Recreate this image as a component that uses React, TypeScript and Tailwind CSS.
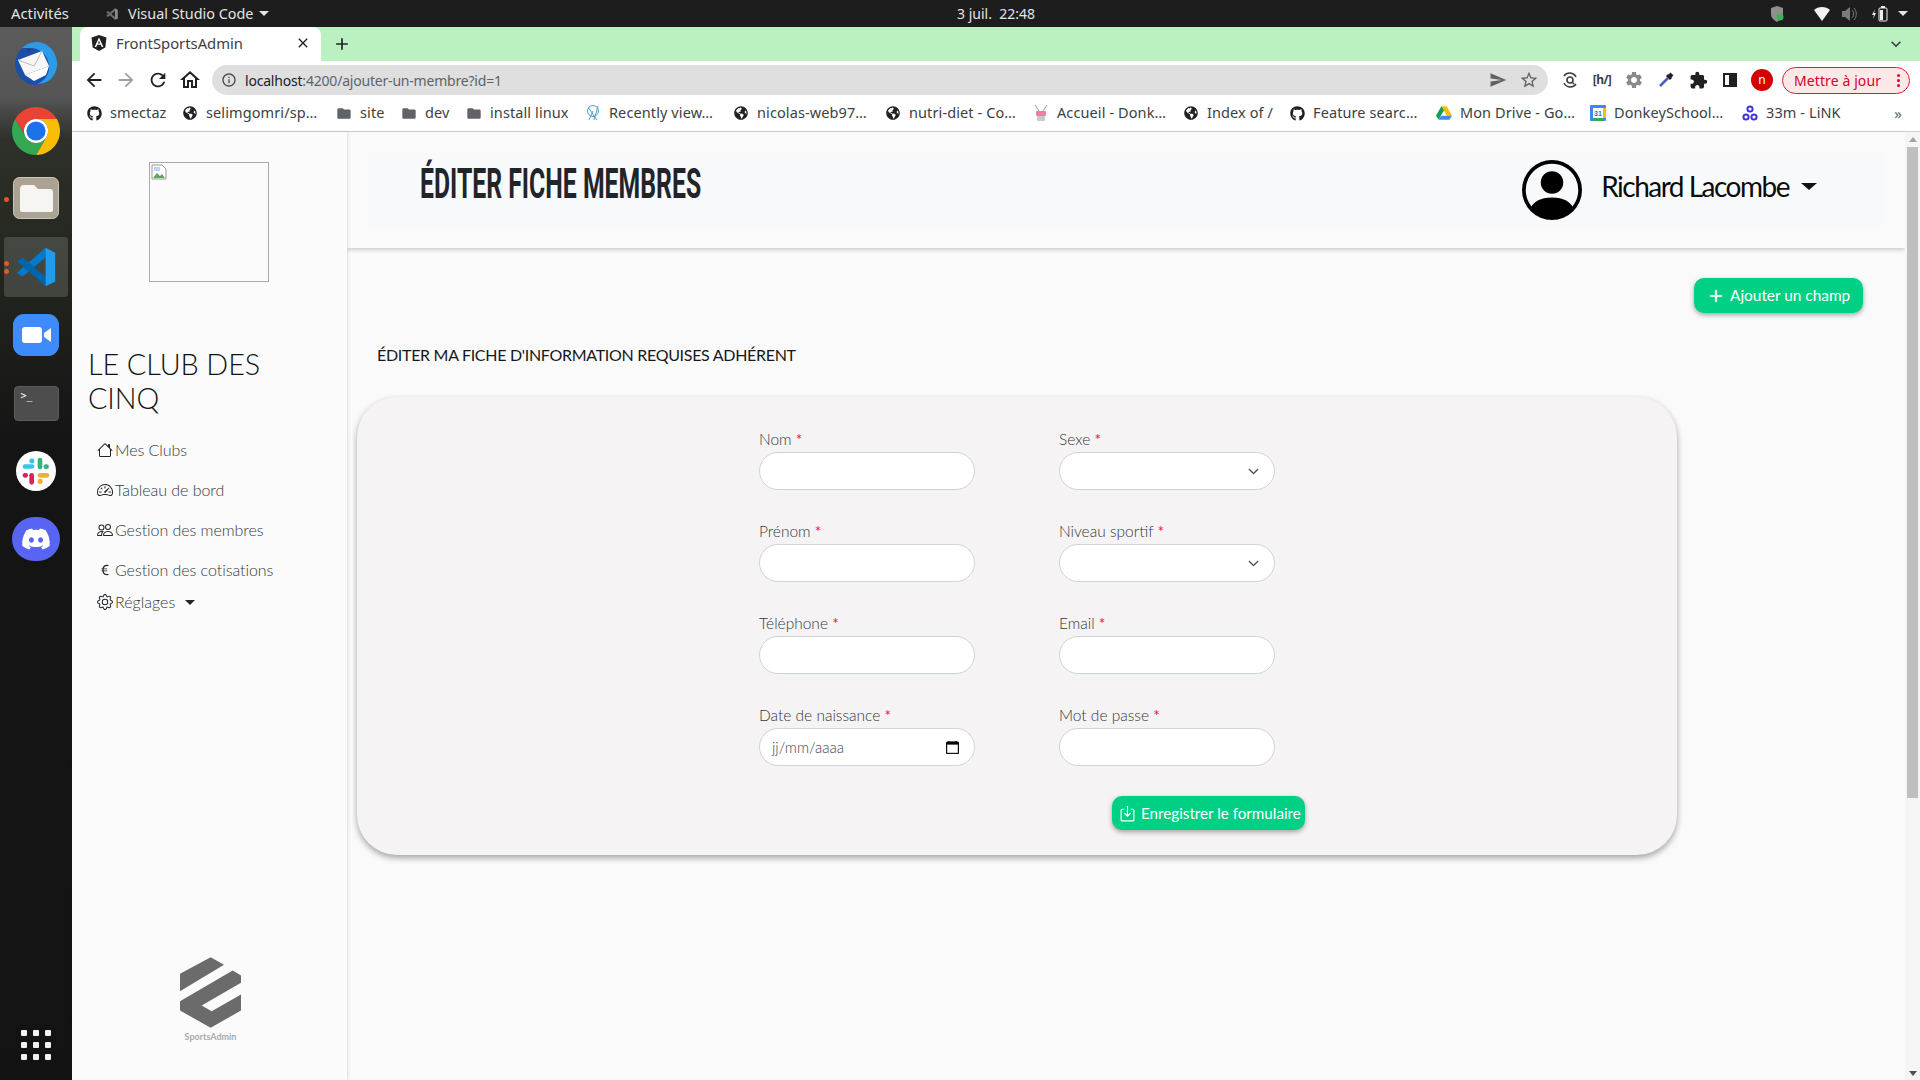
import React from "react";
import { FaGithub, FaGlobeAmericas, FaDiscord } from "react-icons/fa";
import { MdFolder, MdArrowBack, MdArrowForward, MdRefresh, MdOutlineHome, MdInfoOutline, MdSend, MdStarBorder, MdExtension, MdAdd, MdClose, MdExpandMore, MdSettings } from "react-icons/md";
import { BsHouse, BsSpeedometer2, BsPeople, BsGear, BsCurrencyEuro, BsPersonCircle, BsPlus, BsCalendar, BsChevronDown } from "react-icons/bs";

const ui = "font-['Noto_Sans','Open_Sans',sans-serif]";
const page = "font-['Lato','Noto_Sans',sans-serif]";

function Globe() {
  return <FaGlobeAmericas className="text-[14px] text-[#202124]" />;
}
function Folder() {
  return <MdFolder className="text-[17px] text-[#5f6368]" />;
}
function Drive() {
  return (
    <svg width="16" height="16" viewBox="0 0 24 24">
      <path d="M8 2h8l8 14h-8z" fill="#fbbc04" />
      <path d="M8 2L0 16l4 6 8-14z" fill="#0f9d58" />
      <path d="M8 16h16l-4 6H4z" fill="#4285f4" />
    </svg>
  );
}
function GCal() {
  return (
    <svg width="16" height="16" viewBox="0 0 16 16">
      <rect width="16" height="16" rx="1" fill="#4285f4" />
      <rect x="3" y="3" width="10" height="10" fill="#fff" />
      <rect x="13" y="3" width="3" height="10" fill="#fbbc04" />
      <rect x="3" y="13" width="10" height="3" fill="#34a853" />
      <text x="8" y="11" fontSize="7" fontWeight="700" fill="#1a73e8" textAnchor="middle" fontFamily="Liberation Sans">31</text>
    </svg>
  );
}
function Ninja() {
  return (
    <svg width="16" height="18" viewBox="0 0 16 18">
      <path d="M2 1l4 6M14 1l-4 6" stroke="#9a9a9a" strokeWidth="1" />
      <rect x="3" y="7" width="10" height="5" rx="1" fill="#ef7f9c" />
      <rect x="4" y="12" width="8" height="5" rx="1" fill="#c9c9c9" />
    </svg>
  );
}
function Recent() {
  return (
    <svg width="16" height="18" viewBox="0 0 16 18" fill="none" stroke="#4aa3c7" strokeWidth="1">
      <circle cx="8" cy="7" r="5.5" />
      <path d="M3 3l9 13M8 7l-4 9M13 2L9 16" />
    </svg>
  );
}
function Link33() {
  return (
    <svg width="16" height="18" viewBox="0 0 16 18" fill="none" stroke="#3d35e0" strokeWidth="2">
      <circle cx="8" cy="5" r="2.6" />
      <circle cx="4" cy="13" r="2.6" />
      <circle cx="12" cy="13" r="2.6" />
    </svg>
  );
}

const bookmarks = [
  { w: "w-[96px]", icon: <FaGithub className="text-[15px] text-[#202124]" />, t: "smectaz" },
  { w: "w-[154px]", icon: <Globe />, t: "selimgomri/sp…" },
  { w: "w-[65px]", icon: <Folder />, t: "site" },
  { w: "w-[65px]", icon: <Folder />, t: "dev" },
  { w: "w-[119px]", icon: <Folder />, t: "install linux" },
  { w: "w-[148px]", icon: <Recent />, t: "Recently view…" },
  { w: "w-[152px]", icon: <Globe />, t: "nicolas-web97…" },
  { w: "w-[148px]", icon: <Globe />, t: "nutri-diet - Co…" },
  { w: "w-[150px]", icon: <Ninja />, t: "Accueil - Donk…" },
  { w: "w-[106px]", icon: <Globe />, t: "Index of /" },
  { w: "w-[147px]", icon: <FaGithub className="text-[15px] text-[#202124]" />, t: "Feature searc…" },
  { w: "w-[154px]", icon: <Drive />, t: "Mon Drive - Go…" },
  { w: "w-[152px]", icon: <GCal />, t: "DonkeySchool…" },
  { w: "w-[120px]", icon: <Link33 />, t: "33m - LiNK" },
];

function TopBar() {
  return (
    <div className={`${ui} h-[27px] shrink-0 bg-[#1d1d1d] text-[#e4e4e4] text-[14.4px] flex items-center relative`}>
      <span className="ml-[11px] w-[94px] text-[14.8px]">Activités</span>
      <svg width="14" height="14" viewBox="0 0 48 48" className="mr-[9px]">
        <path d="M34 4L44 9V39L34 44Z" fill="#8a8a8a" />
        <path d="M34 4V14L10 34L4 30Z" fill="#6d6d6d" />
        <path d="M4 18L10 14L34 34V44Z" fill="#6d6d6d" />
      </svg>
      <span>Visual Studio Code</span>
      <span className="ml-[6px] w-0 h-0 border-x-[5px] border-x-transparent border-t-[5px] border-t-[#e4e4e4]" />
      <span className="absolute left-[957px] text-[14px]">3 juil.&nbsp;&nbsp;22:48</span>
      <div className="ml-auto flex items-center pr-[12px]">
        <svg width="14" height="16" viewBox="0 0 14 16">
          <path d="M7 0l6 2v6c0 4-3 6-6 8-3-2-6-4-6-8V2z" fill="#8f8f8f" />
          <circle cx="10" cy="11" r="3.5" fill="#3cb55a" />
        </svg>
        <svg width="16" height="14" viewBox="0 0 16 14" className="ml-[30px]">
          <path d="M0 3c4-4 12-4 16 0L8 14z" fill="#f2f2f2" />
        </svg>
        <svg width="16" height="14" viewBox="0 0 16 14" className="ml-[12px]">
          <path d="M0 4h3l5-4v14l-5-4H0z" fill="#7a7a7a" />
          <path d="M10 3c2 2 2 6 0 8M12 1c3 3 3 9 0 12" stroke="#7a7a7a" fill="none" />
        </svg>
        <svg width="16" height="16" viewBox="0 0 16 16" className="ml-[14px]">
          <path d="M3 3L0 9h2l-1 4 3-6H2z" fill="#eee" />
          <rect x="7" y="2" width="8" height="13" rx="1" fill="none" stroke="#eee" />
          <rect x="8" y="4" width="3" height="10" fill="#eee" />
          <rect x="9" y="0" width="4" height="2" fill="#eee" />
        </svg>
        <span className="ml-[10px] w-0 h-0 border-x-[5px] border-x-transparent border-t-[5px] border-t-[#e4e4e4]" />
      </div>
    </div>
  );
}

function DockItem({ children, active, dots }: { children: React.ReactNode; active?: boolean; dots?: number }) {
  return (
    <div className="h-[68px] w-[72px] flex items-center justify-center relative shrink-0">
      {active && <div className="absolute inset-x-[4px] inset-y-[4px] rounded-[3px] bg-white/15" />}
      {dots ? (
        <div className="absolute left-[4px] top-0 bottom-0 flex flex-col justify-center gap-[3px]">
          {Array.from({ length: dots }).map((_, i) => (
            <span key={i} className="w-[5px] h-[5px] rounded-full bg-[#e95420]" />
          ))}
        </div>
      ) : null}
      <div className="relative flex">{children}</div>
    </div>
  );
}

function Dock() {
  return (
    <div className="w-[72px] shrink-0 flex flex-col bg-[linear-gradient(180deg,#5c5c5c_0,#555555_70px,#2e312a_112px,#23261f_240px,#141414_420px,#131313_100%)] pt-[2px]">
      <DockItem>
        <svg width="48" height="48" viewBox="0 0 48 48">
          <circle cx="24" cy="25" r="21" fill="#1c4fa8" />
          <path d="M10 9C20-1 38 1 44 18c3 9 0 17-6 23-5 3-9 4-13 4 8-3 13-10 12-19C36 16 28 9 18 9c-3 0-6 0-8 0z" fill="#2c9be8" />
          <path d="M6 21l24-9 7 15-24 9z" fill="#f7f7f7" />
          <path d="M6 21l16 6 8-15" fill="none" stroke="#bdbdbd" />
          <path d="M13 36l24-9-3 9-12 6z" fill="#ffffff" />
          <circle cx="17" cy="11" r="1.6" fill="#19417f" />
        </svg>
      </DockItem>
      <DockItem>
        <svg width="48" height="48" viewBox="4 4 40 40">
          <path d="M6.68 14A20 20 0 0 1 41.32 14H24A10 10 0 0 0 15.34 29z" fill="#ea4335" />
          <path d="M41.32 14H24A10 10 0 0 1 32.66 29L24 44A20 20 0 0 0 41.32 14z" fill="#fbbc04" />
          <path d="M24 44L32.66 29A10 10 0 0 1 15.34 29L6.68 14A20 20 0 0 0 24 44z" fill="#34a853" />
          <circle cx="24" cy="24" r="10" fill="#fff" />
          <circle cx="24" cy="24" r="8" fill="#1a73e8" />
        </svg>
      </DockItem>
      <DockItem dots={1}>
        <svg width="46" height="44" viewBox="0 0 46 44">
          <rect x="0.5" y="0.5" width="45" height="41" rx="6" fill="#aaa393" stroke="#c9c4b6" />
          <path d="M7 12a4 4 0 0 1 4-4h10l4 4h12a3 3 0 0 1 3 3v18a2 2 0 0 1-2 2H9a2 2 0 0 1-2-2z" fill="#f6f5f2" />
        </svg>
      </DockItem>
      <DockItem active dots={2}>
        <svg width="46" height="46" viewBox="0 0 48 48">
          <path d="M34 4V14L10 34L4 30Z" fill="#007acc" />
          <path d="M4 18L10 14L34 34V44Z" fill="#0065a9" />
          <path d="M34 4L44 9V39L34 44Z" fill="#1f9cf0" />
        </svg>
      </DockItem>
      <DockItem>
        <svg width="46" height="42" viewBox="0 0 46 42">
          <rect width="46" height="42" rx="11" fill="#3d8bfd" />
          <rect x="9" y="13" width="20" height="16" rx="3" fill="#fff" />
          <path d="M31 19l7-5v14l-7-5z" fill="#fff" />
        </svg>
      </DockItem>
      <DockItem>
        <div className="w-[45px] h-[35px] rounded-[4px] bg-[#4d4d4d] border border-[#5c5c5c] text-white text-[10px] leading-none pl-[6px] pt-[4px] font-['DejaVu_Sans_Mono',monospace]">&gt;_</div>
      </DockItem>
      <DockItem>
        <svg width="42" height="40" viewBox="0 0 24 24">
          <circle cx="12" cy="12" r="12" fill="#fff" />
          <rect x="4" y="8" width="7" height="2.6" rx="1.3" fill="#36c5f0" />
          <rect x="8" y="4.5" width="3" height="3" rx="1.3" fill="#36c5f0" />
          <rect x="13" y="4" width="2.8" height="7" rx="1.4" fill="#2eb67d" />
          <rect x="16.5" y="8" width="3.2" height="2.8" rx="1.3" fill="#2eb67d" />
          <rect x="13" y="13.2" width="7" height="2.8" rx="1.4" fill="#ecb22e" />
          <rect x="13" y="16.6" width="3" height="3.2" rx="1.3" fill="#ecb22e" />
          <rect x="8" y="13.2" width="2.8" height="7" rx="1.4" fill="#e01e5a" />
          <rect x="4" y="13.2" width="3.2" height="2.8" rx="1.3" fill="#e01e5a" />
        </svg>
      </DockItem>
      <DockItem>
        <div className="w-[48px] h-[44px] rounded-full bg-[#5865f2] flex items-center justify-center">
          <FaDiscord className="text-white text-[30px]" />
        </div>
      </DockItem>
      <div className="mt-auto mb-[20px] ml-[21px] grid grid-cols-3 gap-x-[6px] gap-y-[6px] w-[30px] justify-items-center">
        {Array.from({ length: 9 }).map((_, i) => (
          <span key={i} className="w-[6px] h-[6px] rounded-[1px] bg-[#f2f2f2]" />
        ))}
      </div>
    </div>
  );
}

function ExtSlot({ children }: { children: React.ReactNode }) {
  return <div className="w-8 flex items-center justify-center">{children}</div>;
}

function Chrome() {
  return (
    <div className={`${ui} shrink-0`}>
      <div className="h-[34px] bg-[#bbf1c0] flex items-stretch pl-[8px] pr-[14px]">
        <div className="w-[241px] bg-white rounded-t-lg flex items-center pl-[11px] pr-[10px] pb-[2px] text-[14.8px] text-[#3c4043]">
          <svg width="16" height="16" viewBox="0 0 16 16" className="mr-[9px]">
            <path d="M8 0l7.5 2.6-1.2 9.8L8 16l-6.3-3.6L.5 2.6z" fill="#202124" />
            <path d="M8 2.5L3.6 12h1.7l.9-2.2h3.6l.9 2.2h1.7zM6.9 8.4L8 5.6l1.1 2.8z" fill="#fff" />
          </svg>
          <span>FrontSportsAdmin</span>
          <MdClose className="ml-auto text-[16px] text-[#202124]" />
        </div>
        <div className="w-[42px] flex items-center justify-center"><MdAdd className="text-[20px] text-[#202124]" /></div>
        <div className="ml-auto flex items-center"><MdExpandMore className="text-[20px] text-[#3c4043]" /></div>
      </div>
      <div className="h-[34px] bg-white flex items-center pl-[6px] pr-[10px] pt-[4px]">
        <div className="flex h-full w-[128px] text-[22px]">
          <ExtSlot><MdArrowBack className="text-[#202124]" /></ExtSlot>
          <ExtSlot><MdArrowForward className="text-[#a0a0a0]" /></ExtSlot>
          <ExtSlot><MdRefresh className="text-[#202124]" /></ExtSlot>
          <ExtSlot><MdOutlineHome className="text-[24px] text-[#202124]" /></ExtSlot>
        </div>
        <div className="ml-[6px] flex-1 h-[30px] rounded-full bg-[#dfdfdf] flex items-center pl-[9px] pr-[9px]">
          <MdInfoOutline className="text-[16px] text-[#4a4a4a] mr-[8px]" />
          <span className="text-[14px] text-[#202124] tracking-[-0.2px]">localhost<span className="text-[#5f6368]">:4200/ajouter-un-membre?id=1</span></span>
          <MdSend className="ml-auto text-[18px] text-[#5f6368] mr-[12px]" />
          <MdStarBorder className="text-[20px] text-[#5f6368]" />
        </div>
        <div className="ml-[6px] flex h-full w-[224px]">
          <ExtSlot>
            <svg width="18" height="18" viewBox="0 0 18 18" fill="none" stroke="#3c4043" strokeWidth="1.6">
              <path d="M3 5a7 7 0 0 1 12 1M15 13a7 7 0 0 1-12-1" />
              <circle cx="9" cy="9" r="3" />
              <path d="M11 11l2 2" />
            </svg>
          </ExtSlot>
          <ExtSlot><span className="text-[12px] font-bold text-[#3c4043] tracking-tighter">[h/]</span></ExtSlot>
          <ExtSlot><MdSettings className="text-[20px] text-[#8a8a8a]" /></ExtSlot>
          <ExtSlot>
            <svg width="18" height="18" viewBox="0 0 18 18">
              <path d="M3 15l8-8" stroke="#4b5fc4" strokeWidth="2.5" />
              <path d="M10 4l4 4" stroke="#222" strokeWidth="3" />
              <path d="M12 6l3-3" stroke="#222" strokeWidth="4" />
            </svg>
          </ExtSlot>
          <ExtSlot><MdExtension className="text-[19px] text-[#202124]" /></ExtSlot>
          <ExtSlot><div className="w-[14px] h-[14px] border-2 border-[#202124] flex justify-end"><div className="w-[6px] h-full bg-[#202124]" /></div></ExtSlot>
          <ExtSlot><div className="w-[22px] h-[22px] rounded-full bg-[#d50000] text-white text-[12px] flex items-center justify-center">n</div></ExtSlot>
        </div>
        <div className="ml-[4px] w-[128px] h-[27px] rounded-full border border-[#e8133c] bg-[#fde8e8] text-[#d6002f] text-[14px] flex items-center pl-[11px] pr-[9px]">
          <span className="tracking-[0.1px]">Mettre à jour</span>
          <span className="ml-auto flex flex-col gap-[2px]">
            <i className="w-[3px] h-[3px] rounded-full bg-[#d6002f]" />
            <i className="w-[3px] h-[3px] rounded-full bg-[#d6002f]" />
            <i className="w-[3px] h-[3px] rounded-full bg-[#d6002f]" />
          </span>
        </div>
      </div>
      <div className="h-[37px] bg-white border-b border-[#cfcfcf] flex items-center pl-[14px] pr-[18px] text-[14.5px] text-[#3c4043]">
        {bookmarks.map((b) => (
          <div key={b.t} className={`${b.w} shrink-0 flex items-center gap-2 whitespace-nowrap`}>
            <span className="w-4 flex justify-center">{b.icon}</span>
            <span className="tracking-[0.1px]">{b.t}</span>
          </div>
        ))}
        <span className="ml-auto text-[#5f6368] text-[15px]">»</span>
      </div>
    </div>
  );
}

const navItems = [
  { icon: <BsHouse />, t: "Mes Clubs", h: "h-10" },
  { icon: <BsSpeedometer2 />, t: "Tableau de bord", h: "h-10" },
  { icon: <BsPeople />, t: "Gestion des membres", h: "h-10" },
  { icon: <BsCurrencyEuro className="text-[14px]" />, t: "Gestion des cotisations", h: "h-10" },
];

function Sidebar() {
  return (
    <aside className={`${page} w-[275px] shrink-0 bg-[#fbfbfb] flex flex-col shadow-[1px_0_3px_rgba(0,0,0,0.12)] z-10`}>
      <div className="mt-[30px] ml-[77px] w-[120px] h-[120px] border border-[#a9a9a9] p-[1px]">
        <svg width="16" height="16" viewBox="0 0 16 16">
          <path d="M1 1h10l4 4v10H1z" fill="#fff" stroke="#9a9a9a" />
          <path d="M2 14l4-5 3 3 2-2 3 4z" fill="#5fa55a" />
          <rect x="3" y="3" width="6" height="4" fill="#bcd3f2" />
        </svg>
      </div>
      <h1 className="mt-[65px] ml-[16px] w-[220px] text-[28.8px] leading-[34px] font-light text-[#111] tracking-[-0.1px]">LE CLUB DES CINQ</h1>
      <nav className="mt-[15px] ml-[22px] text-[16px] font-light text-[#343a40]">
        {navItems.map((n) => (
          <div key={n.t} className={`${n.h} flex items-center`}>
            <span className="w-[21px] flex justify-center text-[16px] text-[#212529]">{n.icon}</span>
            <span className="tracking-[-0.05px]">{n.t}</span>
          </div>
        ))}
        <div className="h-6 flex items-center">
          <span className="w-[21px] flex justify-center text-[16px] text-[#212529]"><BsGear /></span>
          <span>Réglages</span>
          <span className="ml-[10px] w-0 h-0 border-x-[5px] border-x-transparent border-t-[5px] border-t-[#212529]" />
        </div>
      </nav>
      <div className="mt-auto mb-[37px] flex flex-col items-center ml-[2px]">
        <svg width="61" height="71" viewBox="90 80 183 212">
          <path d="M90 130L182 80L222 103L90 182Z" fill="#6b6b6b" />
          <path d="M90 212L248 120L273 135V157L155 225L185 242L273 192V240L182 292L90 240Z" fill="#6b6b6b" />
        </svg>
        <span className="mt-[3px] text-[9px] font-bold text-[#aaa] leading-[12px]">SportsAdmin</span>
      </div>
    </aside>
  );
}

function Label({ t }: { t: string }) {
  return (
    <label className="h-[25px] block text-[15.5px] leading-[24px] font-light text-[#34383d]">
      {t} <span className="font-normal text-[#ff0a45]">*</span>
    </label>
  );
}

const boxClass = "w-[216px] h-[38px] rounded-[19px] border border-[#ced4da] bg-white";

function Field({ t, kind }: { t: string; kind?: "select" | "date" }) {
  return (
    <div>
      <Label t={t} />
      {kind === "select" ? (
        <div className={`${boxClass} flex items-center justify-end pr-[15px]`}>
          <BsChevronDown className="text-[11px] text-[#343a40] stroke-[1]" />
        </div>
      ) : kind === "date" ? (
        <div className={`${boxClass} flex items-center pl-[12px] pr-[15px] text-[15px] font-light text-[#3f4752]`}>
          <span>jj/mm/aaaa</span>
          <BsCalendar className="ml-auto text-[13px] text-black stroke-[0.8]" />
        </div>
      ) : (
        <input aria-label={t} className={`${boxClass} block outline-none`} />
      )}
    </div>
  );
}

function Main() {
  return (
    <main className={`${page} flex-1 min-w-0 bg-[#fafafa] flex flex-col`}>
      <header className="h-[116px] shrink-0 bg-[#fafafa] shadow-[0_2px_4px_rgba(0,0,0,0.18)] py-[20px] px-[20px]">
        <div className="h-full bg-[#f8f9fb] flex items-start pl-[53px] pr-[68px]">
          <div className="mt-[11px] w-[283px] text-[42px] leading-[42px] font-bold text-[#212529] font-['Roboto',sans-serif] whitespace-nowrap scale-x-[0.59] origin-left">ÉDITER FICHE MEMBRES</div>
          <div className="ml-auto flex items-center mt-[8px]">
            <BsPersonCircle className="text-[60px] text-black" />
            <span className="ml-[19px] mb-[8px] text-[28px] leading-[34px] text-[#0b0b0b] tracking-[-1.5px]">Richard Lacombe</span>
            <span className="ml-[12px] mb-[8px] w-0 h-0 border-x-[8px] border-x-transparent border-t-[7px] border-t-[#111]" />
          </div>
        </div>
      </header>
      <div className="mt-[30px] flex justify-end pr-[42px]">
        <button className="h-[35px] w-[169px] rounded-[10px] bg-[#00d084] text-white text-[15.4px] shadow-[0_2px_5px_rgba(0,0,0,0.35)] flex items-center pl-[10px] whitespace-nowrap">
          <BsPlus className="text-[24px] stroke-[0.3]" />
          <span className="ml-[2px]">Ajouter un champ</span>
        </button>
      </div>
      <h2 className="mt-[30px] ml-[30px] h-6 text-[16px] leading-[24px] text-[#16181b] tracking-[-0.3px]">ÉDITER MA FICHE D'INFORMATION REQUISES ADHÉRENT</h2>
      <section className="mt-[30px] ml-[10px] w-[1320px] rounded-[40px] bg-[#f5f3f4] shadow-[0_3px_6px_rgba(0,0,0,0.35)] pt-[30px] pb-[25px] pl-[402px]">
        <div className="grid grid-cols-[216px_216px] gap-x-[84px] gap-y-[29px]">
          <Field t="Nom" />
          <Field t="Sexe" kind="select" />
          <Field t="Prénom" />
          <Field t="Niveau sportif" kind="select" />
          <Field t="Téléphone" />
          <Field t="Email" />
          <Field t="Date de naissance" kind="date" />
          <Field t="Mot de passe" />
        </div>
        <div className="mt-[30px] w-[546px] flex justify-end">
          <button className="h-[34px] w-[193px] rounded-[10px] bg-[#00d084] text-white text-[15.2px] shadow-[0_2px_5px_rgba(0,0,0,0.35)] flex items-center pl-[7px] whitespace-nowrap">
            <svg width="17" height="17" viewBox="0 0 16 16" fill="none" stroke="currentColor" strokeWidth="1.1" className="mr-[5px] shrink-0">
              <path d="M5 4H3a1 1 0 0 0-1 1v9a1 1 0 0 0 1 1h10a1 1 0 0 0 1-1V5a1 1 0 0 0-1-1h-2" />
              <path d="M8 1v9M5 7.5l3 3 3-3" />
            </svg>
            <span>Enregistrer le formulaire</span>
          </button>
        </div>
      </section>
    </main>
  );
}

function Scrollbar() {
  return (
    <div className="w-[15px] shrink-0 bg-[#f5f5f5] flex flex-col items-center">
      <span className="mt-[5px] w-0 h-0 border-x-[4px] border-x-transparent border-b-[5px] border-b-[#a3a3a3]" />
      <div className="mt-[5px] w-[11px] h-[651px] bg-[#bfbfbf]" />
      <span className="mt-auto mb-[4px] w-0 h-0 border-x-[4px] border-x-transparent border-t-[5px] border-t-[#505050]" />
    </div>
  );
}

export default function App() {
  return (
    <div className="w-[1920px] h-[1080px] overflow-hidden flex flex-col bg-[#fafafa]">
      <TopBar />
      <div className="flex-1 min-h-0 flex">
        <Dock />
        <div className="flex-1 min-w-0 flex flex-col">
          <Chrome />
          <div className="flex-1 min-h-0 flex">
            <Sidebar />
            <Main />
            <Scrollbar />
          </div>
        </div>
      </div>
    </div>
  );
}
